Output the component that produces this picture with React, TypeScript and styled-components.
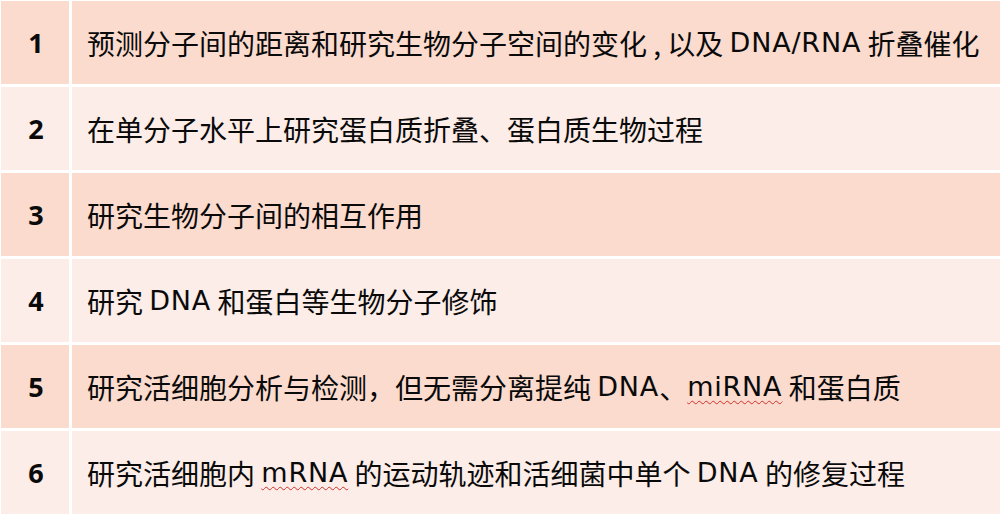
import React from 'react';
import styled, { createGlobalStyle } from 'styled-components';

const GlobalStyle = createGlobalStyle`
  html, body {
    margin: 0;
    padding: 0;
    background: #ffffff;
  }
`;

const DARK = '#fbdbce';
const LIGHT = '#fcede8';

const Table = styled.div`
  display: grid;
  grid-template-columns: 68px 928px;
  grid-auto-rows: 83px;
  column-gap: 3px;
  row-gap: 3px;
  padding: 1px 0 0 1px;
  width: 1004px;
  height: 516px;
  box-sizing: border-box;
  background: #ffffff;
  font-family: 'Noto Sans CJK SC', 'Microsoft YaHei', sans-serif;
  color: #0a0a0a;
`;

const NumCell = styled.div<{ $shade: boolean }>`
  display: flex;
  align-items: center;
  justify-content: center;
  background: ${(p) => (p.$shade ? DARK : LIGHT)};
  font-family: 'Open Sans', 'Noto Sans', sans-serif;
  font-weight: 700;
  font-size: 27px;
  padding-left: 2px;
`;

const TextCell = styled.div<{ $shade: boolean }>`
  display: flex;
  align-items: center;
  padding-left: 15px;
  background: ${(p) => (p.$shade ? DARK : LIGHT)};
  font-size: 28px;
  white-space: pre;
`;

const Latin = styled.span`
  font-family: 'DejaVu Sans', 'Open Sans', sans-serif;
  font-size: 27px;
  letter-spacing: 0.8px;
`;

const Misspelt = styled(Latin)`
  text-decoration: underline wavy #d0302a;
  text-decoration-thickness: 1px;
  text-underline-offset: 4px;
`;

const rows: React.ReactNode[] = [
  <>
    预测分子间的距离和研究生物分子空间的变化 , 以及 <Latin>DNA/RNA</Latin> 折叠催化
  </>,
  <>在单分子水平上研究蛋白质折叠、蛋白质生物过程</>,
  <>研究生物分子间的相互作用</>,
  <>
    研究 <Latin>DNA</Latin> 和蛋白等生物分子修饰
  </>,
  <>
    研究活细胞分析与检测，但无需分离提纯 <Latin>DNA</Latin>、<Misspelt>miRNA</Misspelt> 和蛋白质
  </>,
  <>
    研究活细胞内 <Misspelt>mRNA</Misspelt> 的运动轨迹和活细菌中单个 <Latin>DNA</Latin> 的修复过程
  </>,
];

export default function App() {
  return (
    <>
      <GlobalStyle />
      <Table>
        {rows.map((content, i) => (
          <React.Fragment key={i}>
            <NumCell $shade={i % 2 === 0}>{i + 1}</NumCell>
            <TextCell $shade={i % 2 === 0}>{content}</TextCell>
          </React.Fragment>
        ))}
      </Table>
    </>
  );
}
